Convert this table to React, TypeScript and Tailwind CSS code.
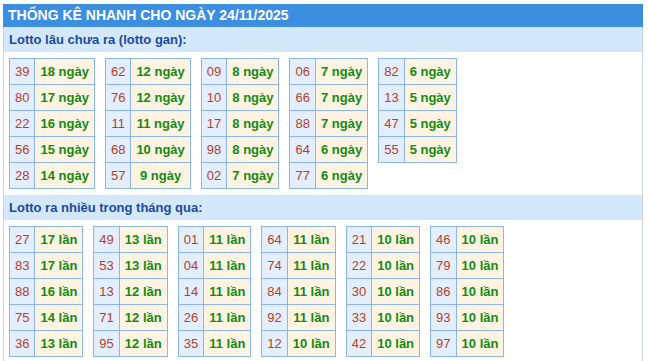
import React from "react";

type Row = [string, number];

const GAN: Row[][] = [
  [["39", 18], ["80", 17], ["22", 16], ["56", 15], ["28", 14]],
  [["62", 12], ["76", 12], ["11", 11], ["68", 10], ["57", 9]],
  [["09", 8], ["10", 8], ["17", 8], ["98", 8], ["02", 7]],
  [["06", 7], ["66", 7], ["88", 7], ["64", 6], ["77", 6]],
  [["82", 6], ["13", 5], ["47", 5], ["55", 5]],
];

const NHIEU: Row[][] = [
  [["27", 17], ["83", 17], ["88", 16], ["75", 14], ["36", 13]],
  [["49", 13], ["53", 13], ["13", 12], ["71", 12], ["95", 12]],
  [["01", 11], ["04", 11], ["14", 11], ["26", 11], ["35", 11]],
  [["64", 11], ["74", 11], ["84", 11], ["92", 11], ["12", 10]],
  [["21", 10], ["22", 10], ["30", 10], ["33", 10], ["42", 10]],
  [["46", 10], ["79", 10], ["86", 10], ["93", 10], ["97", 10]],
];

function LotoTable({ rows, unit }: { rows: Row[]; unit: string }) {
  return (
    <table className="border-collapse text-[13px] leading-none">
      <tbody>
        {rows.map(([num, count]) => (
          <tr key={num} className="h-[26px]">
            <td className="border border-[#8db4f5] bg-[#e3efff] px-[5px] text-center text-[#b8401f]">
              {num}
            </td>
            <td className="border border-[#8db4f5] bg-[#fff4e2] px-[5px] text-center font-bold text-[#148a14]">
              {count} {unit}
            </td>
          </tr>
        ))}
      </tbody>
    </table>
  );
}

function Section({ title, tables, unit }: { title: string; tables: Row[][]; unit: string }) {
  return (
    <div>
      <div className="flex h-[25px] items-center bg-[#d4e8fc] px-[5px] text-[13px] font-bold text-[#1c4aa3]">
        {title}
      </div>
      <div className="flex items-start gap-[10px] px-[5px] py-[6px]">
        {tables.map((t, i) => (
          <LotoTable key={i} rows={t} unit={unit} />
        ))}
      </div>
    </div>
  );
}

export default function App() {
  return (
    <div
      className="h-[361px] bg-white pt-[4px] pl-[3px]"
      style={{ fontFamily: '"Liberation Sans", Arial, sans-serif' }}
    >
      <div className="w-[640px]">
        <div className="flex h-[23px] items-center bg-[#3b8ee0] px-[5px] text-[14px] font-bold uppercase text-white">
          Thống kê nhanh cho ngày 24/11/2025
        </div>
        <div className="h-[334px] border-x border-[#c6d5e6]">
          <Section title="Lotto lâu chưa ra (lotto gan):" tables={GAN} unit="ngày" />
          <Section title="Lotto ra nhiều trong tháng qua:" tables={NHIEU} unit="lần" />
        </div>
      </div>
    </div>
  );
}
